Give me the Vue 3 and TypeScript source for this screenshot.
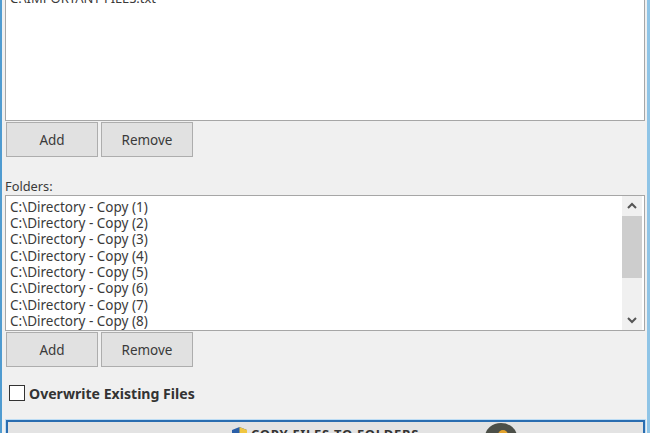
<script setup lang="ts">
const folders: string[] = [1, 2, 3, 4, 5, 6, 7, 8].map((n) => `C:\\Directory - Copy (${n})`)
</script>

<template>
  <div class="window">
    <div class="listbox top-list">
      <div class="file">C:\IMPORTANT FILES.txt</div>
    </div>
    <div class="buttons">
      <button class="btn">Add</button>
      <button class="btn">Remove</button>
    </div>

    <label class="folders-label">Folders:</label>
    <div class="listbox folder-list">
      <div class="rows">
        <div v-for="f in folders" :key="f" class="row">{{ f }}</div>
      </div>
      <div class="scrollbar">
        <svg class="arrow" width="20" height="20" viewBox="0 0 20 20">
          <path d="M6 12 L10 8 L14 12" fill="none" stroke="#555" stroke-width="2" />
        </svg>
        <div class="track"><div class="thumb"></div></div>
        <svg class="arrow" width="20" height="20" viewBox="0 0 20 20">
          <path d="M6 8 L10 12 L14 8" fill="none" stroke="#555" stroke-width="2" />
        </svg>
      </div>
    </div>
    <div class="buttons">
      <button class="btn">Add</button>
      <button class="btn">Remove</button>
    </div>

    <label class="overwrite">
      <span class="check"></span>
      <span>Overwrite Existing Files</span>
    </label>

    <button class="copy">
      <svg class="shield" width="17" height="20" viewBox="0 0 17 20">
        <path d="M8.5 0 L1 3 V10 C1 15 5 18 8.5 20 V10 H16 V3 Z" fill="#2a5fa8" />
        <path d="M8.5 0 V10 H16 V3 Z" fill="#f0c640" />
        <path d="M1 10 H8.5 V20 C5 18 1 15 1 10 Z" fill="#f0c640" />
      </svg>
      <span class="copy-text">COPY FILES TO FOLDERS</span>
      <svg class="disc" width="32" height="28" viewBox="0 0 32 28">
        <ellipse cx="16" cy="14" rx="16" ry="14" fill="#4c4f48" />
        <circle cx="18" cy="12" r="5" fill="#e2a22c" />
      </svg>
    </button>
  </div>
</template>

<style scoped>
.window {
  width: 650px;
  height: 433px;
  box-sizing: border-box;
  overflow: hidden;
  background: #f0f0f0;
  border-left: 2px solid #4f9bd0;
  border-right: 3px solid #8fc4e6;
  padding: 0 2px 0 3px;
  font-family: "Noto Sans", "DejaVu Sans", sans-serif;
  font-size: 13.5px;
  color: #3a3a3a;
  display: flex;
  flex-direction: column;
}
.listbox {
  background: #fff;
  border: 1px solid #a6a6a6;
  box-sizing: border-box;
}
.top-list {
  height: 121px;
  border-top: none;
  padding-left: 4px;
  overflow: hidden;
  flex: none;
}
.file {
  margin-top: -10px;
  line-height: 16.5px;
  font-size: 13px;
  white-space: nowrap;
}
.buttons {
  display: flex;
  gap: 3px;
  padding: 1px 0 0 1px;
  flex: none;
}
.btn {
  width: 92px;
  height: 35px;
  background: #e1e1e1;
  border: 1px solid #adadad;
  font: inherit;
  color: #3a3a3a;
  padding: 0;
}
.folders-label {
  margin-top: 22px;
  height: 15px;
  line-height: 15px;
  font-size: 12.8px;
  flex: none;
}
.folder-list {
  margin-top: 1px;
  height: 136px;
  display: flex;
  flex: none;
  overflow: hidden;
}
.rows {
  flex: 1;
  padding: 2.5px 0 0 4px;
  overflow: hidden;
}
.row {
  height: 16.4px;
  line-height: 16.4px;
  white-space: nowrap;
}
.scrollbar {
  width: 20px;
  margin-right: 2px;
  background: #f0f0f0;
  display: flex;
  flex-direction: column;
}
.arrow {
  flex: none;
}
.track {
  flex: 1;
}
.thumb {
  height: 62px;
  background: #cdcdcd;
}
.overwrite {
  margin: 16px 0 0 4px;
  height: 20px;
  display: flex;
  align-items: center;
  gap: 4px;
  font-weight: 700;
  font-size: 14.1px;
  color: #333;
  flex: none;
}
.check {
  width: 16px;
  height: 16px;
  background: #fff;
  border: 1px solid #333;
  box-sizing: border-box;
}
.copy {
  margin: 17px 0 0 1px;
  width: 639px;
  height: 40px;
  flex: none;
  background: #e3e3e3;
  border: 2px solid #2a6db0;
  outline: 1px solid #bcdcf4;
  font: inherit;
  font-size: 13px;
  font-weight: 700;
  letter-spacing: 0.7px;
  color: #333;
  display: flex;
  align-items: flex-start;
  padding: 5px 0 0 223px;
}
.shield {
  flex: none;
}
.copy-text {
  margin: -1px 0 0 3px;
  width: 234px;
  text-align: left;
  line-height: 16px;
  white-space: nowrap;
}
.disc {
  flex: none;
  margin-top: -4px;
}
</style>
